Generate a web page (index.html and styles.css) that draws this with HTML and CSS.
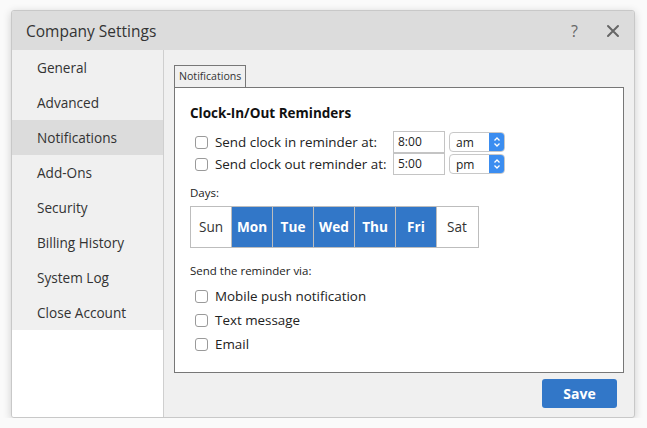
FILE: index.html
```html
<!DOCTYPE html>
<html lang="en">
<head>
    <meta charset="UTF-8">
    <title>Company Settings</title>
    <link rel="stylesheet" href="styles.css">
</head>
<body>
    <div class="dialog">
        <div class="titlebar">
            <span class="title">Company Settings</span>
            <span class="help">?</span>
            <svg class="close" width="14" height="14" viewBox="0 0 14 14">
                <path d="M2 2 L12 12 M12 2 L2 12" stroke="#666" stroke-width="2" stroke-linecap="round"/>
            </svg>
        </div>
        <div class="body">
            <div class="sidebar">
                <ul class="menu">
                    <li>General</li>
                    <li>Advanced</li>
                    <li class="active">Notifications</li>
                    <li>Add-Ons</li>
                    <li>Security</li>
                    <li>Billing History</li>
                    <li>System Log</li>
                    <li>Close Account</li>
                </ul>
            </div>
            <div class="main">
                <div class="tab">Notifications</div>
                <div class="panel">
                    <h3>Clock-In/Out Reminders</h3>
                    <div class="row">
                        <span class="check"></span>
                        <span class="label">Send clock in reminder at:</span>
                        <span class="time">8:00</span>
                        <span class="select">am<span class="arrows"><svg width="8" height="12" viewBox="0 0 8 12"><path d="M1.5 4.5 L4 2 L6.5 4.5 M1.5 7.5 L4 10 L6.5 7.5" stroke="#fff" stroke-width="1.3" fill="none"/></svg></span></span>
                    </div>
                    <div class="row">
                        <span class="check"></span>
                        <span class="label">Send clock out reminder at:</span>
                        <span class="time">5:00</span>
                        <span class="select">pm<span class="arrows"><svg width="8" height="12" viewBox="0 0 8 12"><path d="M1.5 4.5 L4 2 L6.5 4.5 M1.5 7.5 L4 10 L6.5 7.5" stroke="#fff" stroke-width="1.3" fill="none"/></svg></span></span>
                    </div>

                    <p class="caption days-caption">Days:</p>
                    <div class="days">
                        <span class="day">Sun</span>
                        <span class="day on">Mon</span>
                        <span class="day on">Tue</span>
                        <span class="day on">Wed</span>
                        <span class="day on">Thu</span>
                        <span class="day on">Fri</span>
                        <span class="day">Sat</span>
                    </div>

                    <p class="caption via-caption">Send the reminder via:</p>
                    <div class="option"><span class="check"></span>Mobile push notification</div>
                    <div class="option"><span class="check"></span>Text message</div>
                    <div class="option"><span class="check"></span>Email</div>
                </div>
                <div class="actions">
                    <button class="save">Save</button>
                </div>
            </div>
        </div>
    </div>
</body>
</html>
```

FILE: styles.css
```css
body {
    margin: 0;
    background-color: #fafafa;
    font-family: "Open Sans", "Noto Sans", sans-serif;
    color: #222;
}
.dialog {
    width: 622px;
    height: 406px;
    margin: 10px 0 0 11px;
    background: #f0f0f0;
    border: 1px solid #c8c8c8;
    border-radius: 3px;
    box-shadow: 0 2px 8px rgba(0, 0, 0, 0.18);
    display: flex;
    flex-direction: column;
    overflow: hidden;
}
.titlebar {
    height: 39px;
    background: #dcdcdc;
    display: flex;
    align-items: center;
    padding: 0 14px 0 14px;
    flex-shrink: 0;
}
.title {
    font-size: 15.5px;
    color: #333;
    flex: 1;
}
.help {
    font-size: 16px;
    color: #666;
    margin-right: 28px;
}
.body {
    flex: 1;
    display: flex;
}
.sidebar {
    width: 151px;
    background: #fff;
    border-right: 1px solid #cfcfcf;
}
.menu {
    list-style: none;
    margin: 0;
    padding: 0;
    background: #f0f0f0;
}
.menu li {
    height: 35px;
    line-height: 35px;
    padding-left: 25px;
    font-size: 13.6px;
    color: #333;
}
.menu li.active {
    background: #dcdcdc;
}
.main {
    flex: 1;
    padding: 13px 10px 0 10px;
}
.tab {
    display: inline-block;
    font-size: 10.6px;
    color: #333;
    padding: 3px 4px 3px 4px;
    border: 1px solid #777;
    border-bottom: none;
    background: #f0f0f0;
    line-height: 15px;
}
.panel {
    height: 284px;
    background: #fff;
    border: 1px solid #777;
    padding: 0 15px;
}
.panel h3 {
    font-size: 13.5px;
    margin: 16px 0 9px 0;
    color: #111;
}
.row {
    display: flex;
    align-items: center;
    height: 22px;
    font-size: 13.4px;
}
.check {
    display: inline-block;
    width: 11px;
    height: 11px;
    border: 1px solid #9a9a9a;
    border-radius: 3px;
    background: #fff;
    margin: 0 7px 0 5px;
    flex-shrink: 0;
}
.row .label {
    width: 178px;
}
.time {
    width: 46px;
    height: 20px;
    line-height: 20px;
    border: 1px solid #c4c4c4;
    padding-left: 4px;
    font-size: 12px;
}
.select {
    display: flex;
    align-items: center;
    margin-left: 4px;
    width: 48px;
    height: 18px;
    border: 1px solid #c8c8c8;
    border-radius: 4px;
    padding-left: 6px;
    font-size: 12px;
    position: relative;
    overflow: hidden;
}
.arrows {
    position: absolute;
    right: 0;
    top: 0;
    bottom: 0;
    width: 15px;
    background: #3b8df0;
    display: flex;
    align-items: center;
    justify-content: center;
}
.caption {
    font-size: 11.5px;
    margin: 0;
    color: #222;
}
.days-caption {
    margin-top: 10px;
}
.days {
    display: flex;
    margin-top: 6px;
    width: 287px;
    border: 1px solid #bdbdbd;
}
.day {
    width: 40px;
    height: 40px;
    line-height: 40px;
    text-align: center;
    font-size: 13.6px;
    border-left: 1px solid #bdbdbd;
    color: #333;
}
.day:first-child {
    border-left: none;
}
.day.on {
    background: #3277c8;
    color: #fff;
    font-weight: bold;
}
.via-caption {
    margin-top: 15px;
}
.option {
    display: flex;
    align-items: center;
    height: 24px;
    font-size: 13.4px;
}
.via-caption + .option {
    margin-top: 6px;
}
.actions {
    display: flex;
    justify-content: flex-end;
    padding: 6px 7px 0 0;
}
.save {
    width: 75px;
    height: 29px;
    background: #3277c8;
    border: none;
    border-radius: 3px;
    color: #fff;
    font-family: inherit;
    font-weight: bold;
    font-size: 14px;
}
```
